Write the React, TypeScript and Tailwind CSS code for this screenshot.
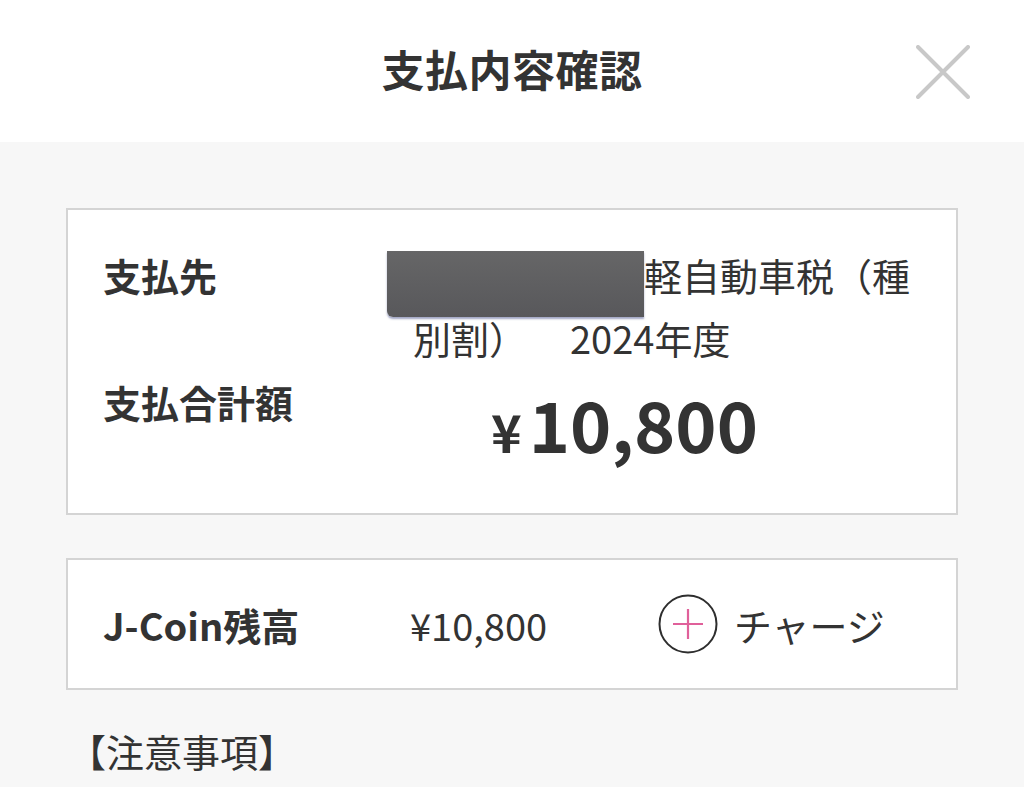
import React from 'react'

const jp = { fontFamily: '"Noto Sans CJK JP", "Noto Sans", sans-serif' }

function CloseIcon() {
  return (
    <svg width="54" height="54" viewBox="0 0 54 54" fill="none">
      <path d="M2 2 L52 52 M52 2 L2 52" stroke="#c8c8c8" strokeWidth="4" strokeLinecap="round" />
    </svg>
  )
}

function PlusCircle() {
  return (
    <svg width="60" height="60" viewBox="0 0 60 60" fill="none">
      <circle cx="30" cy="30" r="28.5" stroke="#2e2e2e" strokeWidth="2" />
      <path d="M30 15 V45 M15 30 H45" stroke="#e0609a" strokeWidth="2.2" />
    </svg>
  )
}

export default function App() {
  return (
    <div className="w-[1024px] h-[787px] overflow-hidden bg-[#f7f7f7] text-[#333]" style={jp}>
      {/* Header */}
      <header className="relative h-[142px] bg-white flex items-center justify-center">
        <h1 className="text-[43px] font-bold leading-none tracking-[0.5px] mt-[-6px]">支払内容確認</h1>
        <button className="absolute right-[54px] top-[45px]">
          <CloseIcon />
        </button>
      </header>

      {/* Payment summary */}
      <section className="mx-[66px] mt-[66px] bg-white border-2 border-[#d4d4d4] pt-[33px] pb-[36px] pl-[35px]">
        <div className="flex">
          <div className="w-[284px] text-[38px] font-bold leading-[63px]">支払先</div>
          <div className="flex-1 text-[38px] leading-[63px]">
            <div className="flex items-start h-[63px]">
              <span className="w-[257px] h-[66px] mt-[8px] rounded-bl-[6px] bg-gradient-to-b from-[#666667] to-[#58585b] shadow-[0_2px_2px_rgba(70,80,140,0.5)]" />
              <span>軽自動車税（種</span>
            </div>
            <div className="pl-[26px]">
              別割）<span className="ml-[43px]">2024年度</span>
            </div>
          </div>
        </div>
        <div className="flex items-start">
          <div className="w-[284px] text-[38px] font-bold leading-[66px]">支払合計額</div>
          <div className="flex items-baseline ml-[104px] mt-[8px] leading-[92px] font-bold">
            <span className="text-[52px] mr-[7px]">¥</span>
            <span className="text-[70px]">10,800</span>
          </div>
        </div>
      </section>

      {/* Balance */}
      <section className="mx-[66px] mt-[43px] h-[132px] bg-white border-2 border-[#d4d4d4] flex items-center pl-[35px]">
        <div className="w-[307px] text-[38px] font-bold">J-Coin残高</div>
        <div className="w-[248px] text-[38px]">¥10,800</div>
        <div className="flex items-center gap-[16px]">
          <PlusCircle />
          <span className="text-[38px]">チャージ</span>
        </div>
      </section>

      {/* Notes */}
      <div className="ml-[68px] mt-[36px] text-[38px] leading-[50px]">【注意事項】</div>
    </div>
  )
}
